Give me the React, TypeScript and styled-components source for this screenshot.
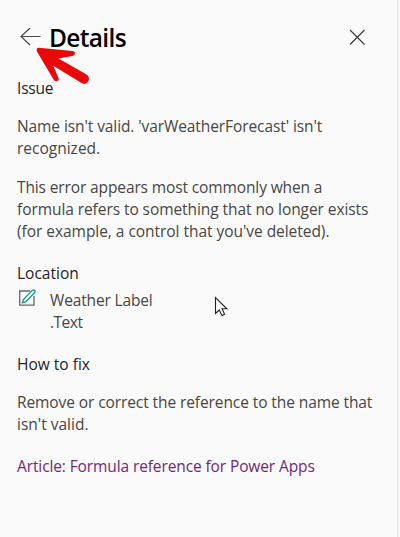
import React from "react";
import styled, { createGlobalStyle } from "styled-components";

const GlobalStyle = createGlobalStyle`
  *, *::before, *::after { box-sizing: border-box; }
  body {
    margin: 0;
    background: #f7f7f7;
    font-family: "Open Sans", "Noto Sans", sans-serif;
  }
`;

const Panel = styled.main`
  position: relative;
  display: flex;
  flex-direction: column;
  width: 398px;
  height: 537px;
  padding: 22px 24px 0 17px;
  overflow: hidden;
  background: #fafafa;
  border-right: 1px solid #e6e6e6;
`;

const Header = styled.header`
  display: flex;
  align-items: center;
  height: 32px;
  margin-bottom: 23px;
`;

const IconButton = styled.button<{ $push?: boolean }>`
  display: flex;
  padding: 0;
  border: 0;
  background: none;
  margin: ${(p) => (p.$push ? "0 8px 0 auto" : "0 7px 0 3px")};
`;

const Title = styled.h1`
  margin: 0;
  color: #000;
  font-size: 24.5px;
  line-height: 32px;
  font-weight: 600;
`;

const SectionTitle = styled.h2<{ $gap?: number }>`
  margin: 0 0 ${(p) => p.$gap ?? 16}px;
  color: #242424;
  font-size: 15.5px;
  line-height: 22px;
  font-weight: 400;
`;

const Paragraph = styled.p<{ $gap?: number }>`
  margin: 0 0 ${(p) => p.$gap ?? 17}px;
  color: #484644;
  font-size: 15.5px;
  line-height: 22px;
`;

const Line = styled.span<{ $track?: number }>`
  display: block;
  width: max-content;
  white-space: nowrap;
  letter-spacing: ${(p) => p.$track ?? 0}px;
`;

const Location = styled.div`
  display: flex;
  align-items: flex-start;
  gap: 12px;
  margin-bottom: 20px;
  padding-left: 1px;
`;

const ArticleLink = styled.a`
  color: #742774;
  font-size: 15.5px;
  line-height: 22px;
  text-decoration: none;
`;

const PointerArrow = styled.svg`
  position: absolute;
  left: 34px;
  top: 44px;
`;

const Cursor = styled.svg`
  position: absolute;
  left: 214px;
  top: 296px;
`;

export default function App() {
  return (
    <>
      <GlobalStyle />
      <Panel>
        <Header>
          <IconButton aria-label="Back">
            <svg width="22" height="20" viewBox="0 0 22 20" fill="none" stroke="#4a4948" strokeWidth="1.2">
              <path d="M20.5 8.5H1M10 0L1 8.5L10 17" />
            </svg>
          </IconButton>
          <Title><Line $track={-0.65}>Details</Line></Title>
          <IconButton $push aria-label="Close">
            <svg width="16" height="18" viewBox="0 0 16 18" fill="none" stroke="#3b3a39" strokeWidth="1.2">
              <path d="M1 1L15.5 15.5M15.5 1L1 15.5" />
            </svg>
          </IconButton>
        </Header>
        <SectionTitle><Line $track={-0.2}>Issue</Line></SectionTitle>
        <Paragraph>
          <Line $track={-0.09}>Name isn't valid. 'varWeatherForecast' isn't</Line>
          <Line>recognized.</Line>
        </Paragraph>
        <Paragraph $gap={20}>
          <Line $track={-0.12}>This error appears most commonly when a</Line>
          <Line $track={-0.07}>formula refers to something that no longer exists</Line>
          <Line $track={-0.04}>(for example, a control that you've deleted).</Line>
        </Paragraph>
        <SectionTitle $gap={5}><Line>Location</Line></SectionTitle>
        <Location>
          <svg width="20" height="20" viewBox="0 0 20 20" fill="none">
            <path d="M12 2H1.7V16.2H16V7" stroke="#6b6a69" strokeWidth="1.3" />
            <path d="M4.5 13.8L5.6 10.3L14.2 1.4Q15.5 0.4 16.6 1.4Q17.6 2.6 16.6 3.8L8 12.6Z" fill="#fafafa" stroke="#159a96" strokeWidth="1.3" />
          </svg>
          <Paragraph $gap={0}>
            <Line $track={-0.15}>Weather Label</Line>
            <Line $track={-0.5}>.Text</Line>
          </Paragraph>
        </Location>
        <SectionTitle><Line>How to fix</Line></SectionTitle>
        <Paragraph $gap={20}>
          <Line $track={-0.09}>Remove or correct the reference to the name that</Line>
          <Line>isn't valid.</Line>
        </Paragraph>
        <ArticleLink><Line $track={-0.11}>Article: Formula reference for Power Apps</Line></ArticleLink>
        <PointerArrow width="58" height="42" viewBox="0 0 58 42" aria-hidden="true">
          <path
            d="M4.8 3.8L38.3 7Q41 7.3 40.9 9.6Q40.8 11.7 38.3 12L24.5 14.5L52.5 30.6Q56 33 54.5 37Q52.3 41.3 48 39.2L19.3 21.8L24.6 34.3Q25.2 36.6 23 37.2Q20.8 37.8 19.4 35.3L2.8 7.3Q2 3.8 4.8 3.8Z"
            fill="#ea0909"
          />
        </PointerArrow>
        <Cursor width="16" height="22" viewBox="0 0 16 22" aria-hidden="true">
          <path d="M1.5 1.5V17.5L5.2 14L8 19.5L10.6 18.2L8 12.8H12.8Z" fill="#fff" stroke="#24222c" strokeWidth="1.1" />
        </Cursor>
      </Panel>
    </>
  );
}
